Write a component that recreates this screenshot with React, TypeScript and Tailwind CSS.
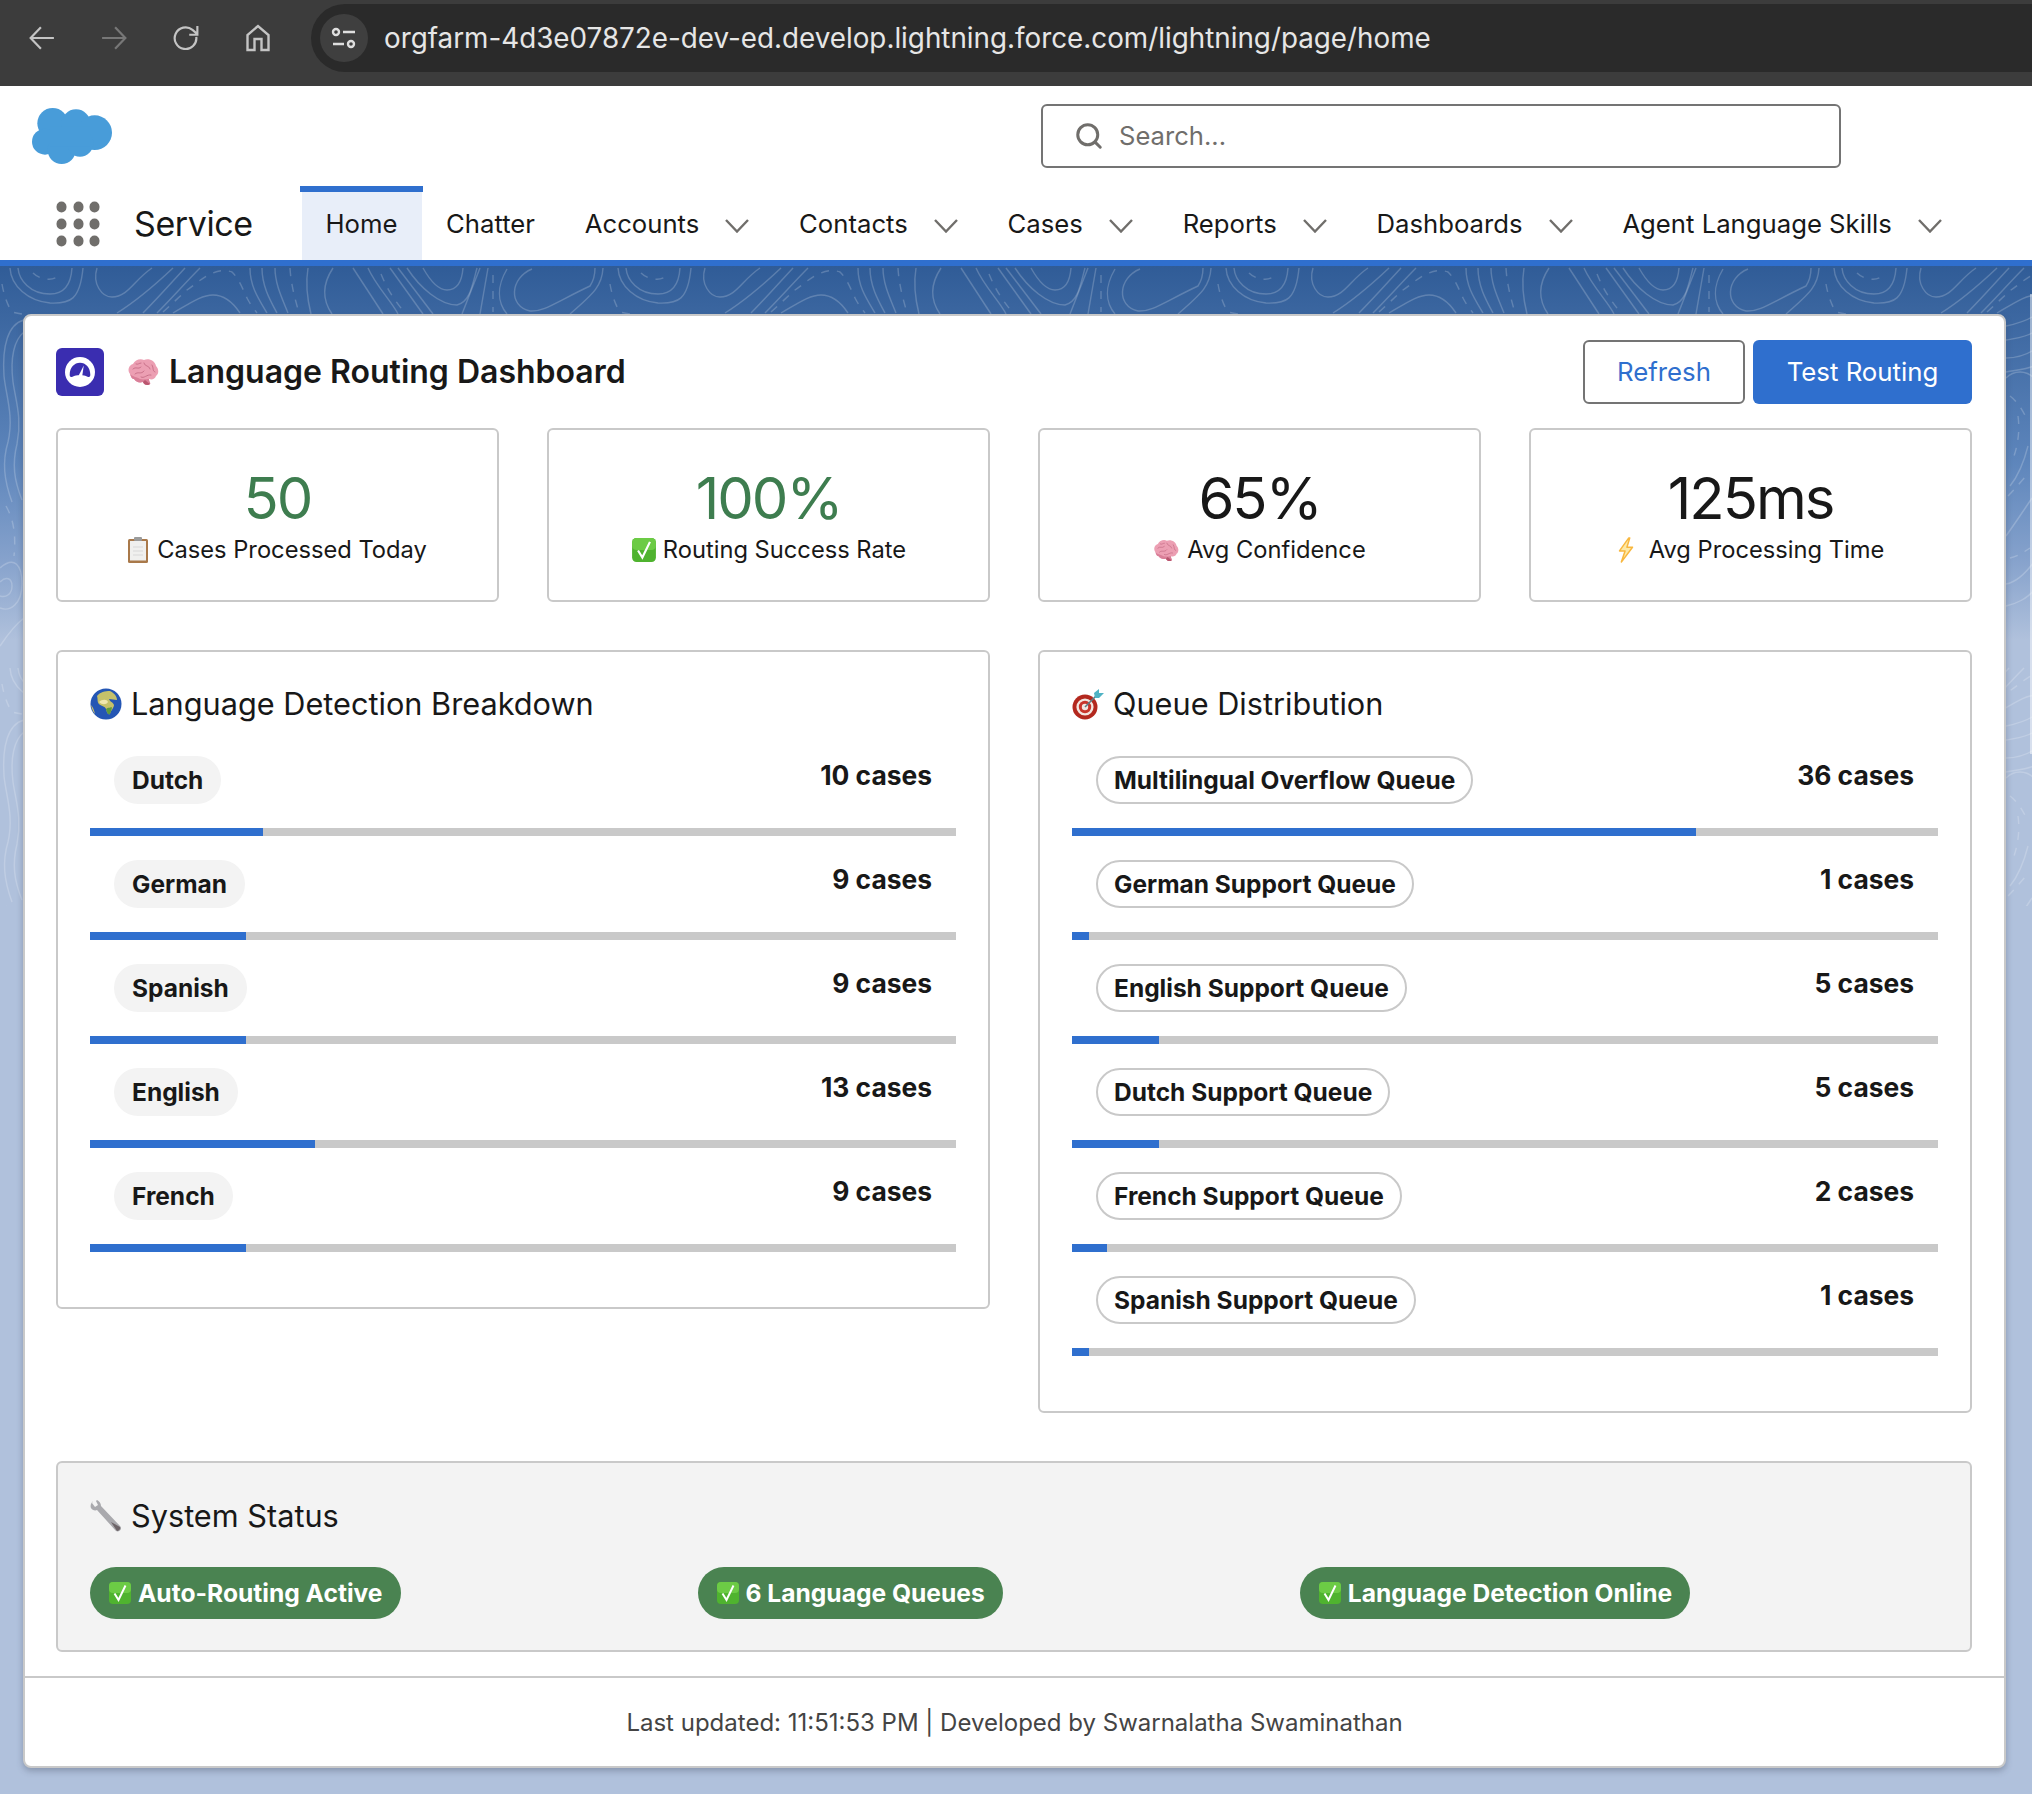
import React from "react";
import { Search } from "lucide-react";

const tabs = [
  { label: "Chatter", menu: false },
  { label: "Accounts", menu: true },
  { label: "Contacts", menu: true },
  { label: "Cases", menu: true },
  { label: "Reports", menu: true },
  { label: "Dashboards", menu: true },
  { label: "Agent Language Skills", menu: true },
];

const languages = [
  { name: "Dutch", count: 10 },
  { name: "German", count: 9 },
  { name: "Spanish", count: 9 },
  { name: "English", count: 13 },
  { name: "French", count: 9 },
];

const queues = [
  { name: "Multilingual Overflow Queue", count: 36 },
  { name: "German Support Queue", count: 1 },
  { name: "English Support Queue", count: 5 },
  { name: "Dutch Support Queue", count: 5 },
  { name: "French Support Queue", count: 2 },
  { name: "Spanish Support Queue", count: 1 },
];

function BrainIcon({ className }: { className: string }) {
  return (
    <svg viewBox="0 0 32 28" className={className}>
      <path
        d="M3 16C0 12 2 7 6 6C8 2 13 0 17 2C22 0 28 3 29 8C32 11 32 16 29 18C28 21 25 22 22 21C22 24 24 25 23 26C21 28 17 27 16 24C12 25 9 24 7 21C5 21 4 19 3 16Z"
        fill="#ec9fb3"
      />
      <path d="M3 16C6 19 10 19 13 21C16 22 20 21 22 21C22 24 24 25 23 26C21 28 17 27 16 24C12 25 9 24 7 21C5 21 4 19 3 16Z" fill="#d97f98" />
      <path
        d="M6 11C9 8 11 12 14 9M8 16C11 13 14 17 17 13M17 5C18 9 22 7 23 11M14 19C17 21 20 16 24 17M25 7C27 10 25 13 28 14M9 6C11 7 12 5 14 5"
        fill="none"
        stroke="#c56d86"
        strokeWidth="0.9"
        strokeLinecap="round"
      />
      <path d="M18 22C20 24 22 25 23 26C21 28 17 27 16 24Z" fill="#b9566f" />
    </svg>
  );
}

function CheckIcon({ className }: { className: string }) {
  return (
    <svg viewBox="0 0 24 24" className={className}>
      <rect x="1" y="1" width="22" height="22" rx="4" fill="#4fb32f" />
      <rect x="1" y="1" width="22" height="11" rx="4" fill="#6ccb45" />
      <path d="M6.5 12.5L10.5 19L17.5 4.5" fill="none" stroke="#fff" strokeWidth="2" />
    </svg>
  );
}

function ClipboardIcon({ className }: { className: string }) {
  return (
    <svg viewBox="0 0 20 26" className={className}>
      <rect x="0" y="2" width="20" height="24" rx="1.5" fill="#a9794a" />
      <rect x="2" y="4" width="16" height="19.5" fill="#f0f0ee" />
      <path d="M5 10H15M5 14H15M5 18H15" stroke="#d8d8d8" strokeWidth="1" />
      <rect x="6" y="0" width="8" height="4" rx="1" fill="#9b9b9b" />
    </svg>
  );
}

function BoltIcon({ className }: { className: string }) {
  return (
    <svg viewBox="0 0 18 28" className={className}>
      <path
        d="M12 1L2 15H8L4 27L16 11H10L13 1Z"
        fill="#fde9a6"
        stroke="#f8b73e"
        strokeWidth="1.6"
        strokeLinejoin="round"
      />
    </svg>
  );
}

function GlobeIcon({ className }: { className: string }) {
  return (
    <svg viewBox="0 0 32 32" className={className}>
      <circle cx="16" cy="16" r="15.5" fill="#2456b4" />
      <path
        d="M7 8C10 4 15 3 20 3C24 5 27 8 27 12C24 12 22 11 19 11C20 14 23 14 24 17C24 20 21 22 20 26C18 27 17 25 16 21C15 18 11 18 9 16C7 14 8 11 7 8Z"
        fill="#c5c16a"
      />
      <path d="M9 14C12 11 17 11 18 14C16 17 12 17 9 14Z" fill="#efe6ae" />
      <path d="M16 21C18 19 21 20 22 19C22 22 20 25 20 26C18 27 17 25 16 21Z" fill="#5f9a3c" />
      <path d="M1 17C2 21 3 24 5 26C4 22 3 19 1 17Z" fill="#d2c66f" />
    </svg>
  );
}

function TargetIcon({ className }: { className: string }) {
  return (
    <svg viewBox="0 0 32 32" className={className}>
      <circle cx="13" cy="19" r="12.5" fill="#b3281e" />
      <circle cx="13" cy="19" r="8.6" fill="#f3e6e0" />
      <circle cx="13" cy="19" r="6.2" fill="#c8352a" />
      <circle cx="13" cy="19" r="3.2" fill="#f3e6e0" />
      <path d="M13 19L24 8" stroke="#5b7d86" strokeWidth="1.6" />
      <path d="M22 5L27 1L27 5L32 5L27 10L23 10Z" fill="#4fb3c4" />
    </svg>
  );
}

function WrenchIcon({ className }: { className: string }) {
  return (
    <svg viewBox="0 0 32 32" className={className}>
      <path
        d="M3 1C1 3 0 6 1 8C2 10 5 11 7 10L26 31C28 32 30 31 31 29C31 28 31 27 30 26L11 6C11 3 9 1 7 0L6 1L8 5L5 7L2 3Z"
        fill="#a9a9ad"
      />
      <path d="M21 22L30 27C31 29 29 31 27 31Z" fill="#6d6468" />
    </svg>
  );
}

function NavChevron() {
  return (
    <svg viewBox="0 0 24 14" className="ml-[26px] w-[24px] h-[14px] mt-[3px]" fill="none" stroke="#706e6b" strokeWidth="2.4">
      <path d="M1 1L12 12.5L23 1" />
    </svg>
  );
}

// one tile of the contour lines behind the card
function Contours() {
  const solid = [
    "M10 2C11 20 28 35 50 37C70 38 80 34 83 2",
    "M18 2C19 14 30 28 50 28C64 28 71 18 72 2",
    "M97 2C92 18 102 31 112 31C128 31 134 14 152 2",
    "M117 47C138 34 156 18 173 2",
    "M143 47C158 32 172 16 185 2",
    "M157 47C172 32 186 16 200 2",
    "M173 47C192 36 202 29 213 29C226 29 234 38 240 47",
    "M250 2C250 20 258 32 267 47",
    "M262 2C262 20 270 34 277 47",
    "M275 2C275 18 282 32 288 47",
    "M308 2C305 20 308 36 311 48",
    "M333 2C321 20 323 35 332 48",
    "M353 2L383 48",
    "M368 2C376 20 392 36 398 48",
    "M390 2L423 48",
    "M398 2L433 48",
    "M407 2C420 22 440 39 457 39C470 36 472 20 477 2",
    "M423 2C432 18 440 24 447 24C458 24 462 15 463 2",
    "M480 2L462 48",
    "M488 2L480 48",
    "M507 3C497 20 497 36 507 48",
    "M532 3C510 12 508 40 530 45C544 46 556 36 590 20C594 14 595 8 595 2",
    "M603 2C602 22 590 30 570 48",
    // left strip
    "M24 54C8 58 2 80 4 110C6 130 14 150 8 176C2 196 4 214 12 236",
    "M24 66C14 74 10 92 13 116C16 136 22 152 17 178C12 198 14 214 22 234",
    "M0 302C14 290 22 298 22 318C22 338 10 346 0 342",
    "M0 316C6 310 12 312 12 320C12 328 6 332 0 330",
    "M0 380C8 368 16 358 24 352",
    // right strip
    "M182 60C192 58 200 56 210 50",
    "M182 74C192 72 200 72 210 66",
    "M182 92C192 92 200 90 210 84",
    "M182 106C192 104 200 104 210 100",
    "M182 112C190 104 202 104 210 112",
    "M186 220C194 210 200 196 204 180",
    "M182 270C192 256 200 244 208 232",
    "M182 318C194 316 204 304 210 296",
    "M182 340C192 338 204 332 210 324",
  ];
  const dashed = [
    "M33 7C38 12 50 16 57 11",
    "M2 18C4 30 8 40 12 46C30 50 48 52 66 58",
    "M163 46C172 38 180 30 187 24C196 18 204 10 213 7C220 4 226 4 232 6C240 14 243 24 247 32C250 38 254 43 257 47",
    "M290 2C291 20 296 36 299 47",
    "M381 8C386 20 392 32 406 48",
    "M493 9V46",
    "M610 2V33",
    "M6 240C14 254 16 270 14 290",
    "M186 130C194 136 200 146 204 156",
    "M194 150C196 164 194 178 190 190",
    "M184 230C192 222 198 214 204 208",
    "M186 292C194 290 200 286 206 282",
  ];
  return (
    <svg className="absolute left-0 top-0 w-full h-[640px]">
      <defs>
        <pattern id="contours" width="608" height="400" patternUnits="userSpaceOnUse">
          {solid.map((d, i) => (
            <path key={i} d={d} fill="none" stroke="#fff" strokeOpacity="0.2" strokeWidth="1.4" />
          ))}
          {dashed.map((d, i) => (
            <path
              key={i}
              d={d}
              fill="none"
              stroke="#fff"
              strokeOpacity="0.2"
              strokeWidth="1.4"
              strokeDasharray="8 8"
            />
          ))}
        </pattern>
      </defs>
      <rect width="100%" height="100%" fill="url(#contours)" />
    </svg>
  );
}

function BrowserBar() {
  return (
    <div className="h-[86px] bg-[#3c3c3c] flex items-start pt-1">
      <div className="flex w-[311px] h-[68px] items-center">
        <svg viewBox="0 0 24 24" className="ml-[29px] w-[26px] h-[26px]" fill="none" stroke="#c4c4c4" strokeWidth="2">
          <path d="M23 12H2M11 2L1.5 12L11 22" />
        </svg>
        <svg viewBox="0 0 24 24" className="ml-[46px] w-[26px] h-[26px]" fill="none" stroke="#777" strokeWidth="2">
          <path d="M1 12H22M13 2L22.5 12L13 22" />
        </svg>
        <svg viewBox="0 0 24 24" className="ml-[46px] w-[26px] h-[26px]" fill="none" stroke="#c4c4c4" strokeWidth="2">
          <path d="M21.5 11A10 10 0 1 1 18 4.5L22 8M22.5 1V9H15" />
        </svg>
        <svg viewBox="0 0 24 28" className="ml-[46px] w-[26px] h-[28px]" fill="none" stroke="#c4c4c4" strokeWidth="2.4">
          <path d="M1.5 26V11L12 2L22.5 11V26H15.5V15H8.5V26Z" />
        </svg>
      </div>
      <div className="flex-1 h-[68px] bg-[#2a2a2a] rounded-l-[34px] flex items-center pl-[9px]">
        <div className="w-[48px] h-[48px] rounded-full bg-[#3f3f3f] flex items-center justify-center">
          <svg viewBox="0 0 26 24" className="w-[26px] h-[24px]" fill="none" stroke="#dedede" strokeWidth="2.4">
            <circle cx="5" cy="6" r="3" />
            <path d="M12 6H24M2 18H13" />
            <circle cx="20" cy="18" r="3" />
          </svg>
        </div>
        <span className="ml-[16px] pt-[2px] text-[27.8px] leading-none text-[#e6e6e6]">
          orgfarm-4d3e07872e-dev-ed.develop.lightning.force.com/lightning/page/home
        </span>
      </div>
    </div>
  );
}

function AppHeader() {
  return (
    <header className="bg-white">
      <div className="h-[100px] flex items-start">
        <svg viewBox="96 324 240 168" className="ml-[32px] mt-[22px] w-[80px] h-[56px]" fill="#489cd9">
          <circle cx="158" cy="370" r="46" />
          <circle cx="228" cy="372" r="44" />
          <circle cx="284" cy="398" r="52" />
          <circle cx="135" cy="425" r="39" />
          <circle cx="185" cy="450" r="42" />
          <circle cx="240" cy="430" r="40" />
          <rect x="150" y="380" width="120" height="60" />
        </svg>
        <div className="ml-[929px] mt-[18px] w-[800px] h-[64px] border-2 border-[#747474] rounded-[6px] flex items-center pl-[31px]">
          <Search className="w-[30px] h-[30px] text-[#706e6b]" strokeWidth={2.4} />
          <span className="ml-[15px] pt-[1px] text-[25.6px] text-[#706e6b]">Search...</span>
        </div>
      </div>
      <nav className="h-[74px] flex items-stretch">
        <div className="ml-[57px] w-[42px] h-[42px] mt-[16px] grid grid-cols-3 gap-x-[8px] gap-y-[7px]">
          {Array.from({ length: 9 }).map((_, i) => (
            <span key={i} className="w-[9px] h-[10px] rounded-full bg-[#706e6b] scale-110" />
          ))}
        </div>
        <div className="ml-[35px] w-[166px] flex items-center text-[34px] tracking-[-0.4px] leading-none text-[#181818] pt-[1px]">
          Service
        </div>
        <div className="w-[123px] flex flex-col items-center">
          <div className="w-[123px] h-[6px] bg-[#2f6fce]" />
          <div className="w-[120px] flex-1 bg-[#e8eef9] flex items-center justify-center text-[25.7px] text-[#181818]">
            <span className="-mt-[3px]">Home</span>
          </div>
        </div>
        {tabs.map((tab) => (
          <div key={tab.label} className="pl-[23px] pr-[26.8px] pt-[3px] flex items-center text-[25.7px] text-[#181818]">
            <span>{tab.label}</span>
            {tab.menu && <NavChevron />}
          </div>
        ))}
      </nav>
      <div className="h-[6px] bg-[#2f6fce]" />
    </header>
  );
}

function StatCard({ value, green, icon, label }: { value: string; green?: boolean; icon: React.ReactNode; label: string }) {
  return (
    <div className="border-2 border-[#c9c9c9] rounded-[6px] h-[174px] flex flex-col items-center pt-[37px]">
      <div className={`text-[58px] leading-[62px] tracking-[-2px] ${green ? "text-[#3e7d4f]" : "text-[#181818]"}`}>{value}</div>
      <div className="mt-[3px] flex items-center text-[23.7px] leading-[36px] text-[#181818]">
        {icon}
        <span>{label}</span>
      </div>
    </div>
  );
}

function BreakdownRow({ name, count, outlined, total }: { name: string; count: number; outlined?: boolean; total: number }) {
  const pct = (count / total) * 100;
  return (
    <div className="pb-[24px]">
      <div className="flex items-start justify-between px-[24px]">
        <span
          className={`h-[48px] rounded-full pt-[1px] flex items-center text-[24.5px] font-bold text-[#181818] ${
            outlined ? "border-2 border-[#c9c9c9] bg-white px-[16px]" : "bg-[#f3f3f3] px-[18px]"
          }`}
        >
          {name}
        </span>
        <span className="text-[26.4px] leading-[38px] font-bold text-[#181818]">{count} cases</span>
      </div>
      <div className="mt-[24px] h-[8px] bg-[#c9c9c9]">
        <div className="h-full bg-[#2f6fce]" style={{ width: `${pct}%` }} />
      </div>
    </div>
  );
}

function StatusPill({ label }: { label: string }) {
  return (
    <span className="h-[52px] rounded-full bg-[#4a8351] pl-[18px] pr-[18px] flex items-center text-[24.6px] font-bold text-white whitespace-nowrap">
      <CheckIcon className="w-[24px] h-[24px] mr-[6px]" />
      {label}
    </span>
  );
}

export default function App() {
  return (
    <div className="w-[2032px] min-h-[1794px] overflow-hidden [font-family:Inter,'Noto_Sans',sans-serif] bg-[#b0c1dc]">
      <BrowserBar />
      <AppHeader />
      <main className="relative bg-[linear-gradient(to_bottom,#305c97_0px,#5d85bb_194px,#86a2cc_294px,#b0c1dc_374px,#b0c1dc_100%)] pl-[23px] pr-[26px] pt-[48px] pb-[25px]">
        <Contours />
        {/* pale sliver along the right edge of the page */}
        <div className="absolute right-0 top-[28px] w-[2px] h-[460px] bg-white/50" />
        <div className="relative bg-white border-2 border-[#c9c9c9] rounded-[8px] shadow-[0_3px_6px_rgba(60,70,90,0.35)]">
          <div className="pl-[31px] pr-[32px] pt-[24px] pb-[24px]">
            <div className="h-[64px] flex items-center">
              <div className="w-[48px] h-[48px] rounded-[6px] bg-[#3a2db0] flex items-center justify-center">
                <svg viewBox="0 0 32 32" className="w-[30px] h-[30px]">
                  <circle cx="16" cy="16" r="16" fill="#fff" />
                  <path d="M5 19C5 11 10 6 16 6C22 6 27 11 27 19C27 21 26 22 24 21C20 19 12 19 8 21C6 22 5 21 5 19Z" fill="#3a2db0" />
                  <path d="M13 23L20 9L18 23Z" fill="#fff" />
                </svg>
              </div>
              <BrainIcon className="ml-[23px] w-[32px] h-[28px]" />
              <h1 className="ml-[10px] text-[32px] leading-none font-semibold text-[#181818]">Language Routing Dashboard</h1>
              <button className="ml-auto h-[64px] w-[162px] border-2 border-[#747474] rounded-[6px] bg-white text-[25.8px] text-[#2f6fce]">
                Refresh
              </button>
              <button className="ml-[8px] h-[64px] w-[219px] rounded-[6px] bg-[#2f6fce] text-[25.8px] text-white">Test Routing</button>
            </div>

            <div className="mt-[24px] grid grid-cols-[repeat(4,443px)] gap-[48px]">
              <StatCard value="50" green icon={<ClipboardIcon className="w-[20px] h-[26px] mr-[9px]" />} label="Cases Processed Today" />
              <StatCard value="100%" green icon={<CheckIcon className="w-[26px] h-[26px] mr-[6px]" />} label="Routing Success Rate" />
              <StatCard value="65%" icon={<BrainIcon className="w-[26px] h-[23px] mr-[8px]" />} label="Avg Confidence" />
              <StatCard value="125ms" icon={<BoltIcon className="w-[18px] h-[26px] mr-[14px]" />} label="Avg Processing Time" />
            </div>

            <div className="mt-[48px] grid grid-cols-[934px_934px] gap-[48px] items-start">
              <section className="border-2 border-[#c9c9c9] rounded-[6px] pt-[30px] px-[32px] pb-[31px]">
                <h2 className="flex items-center text-[30.7px] leading-[44px] text-[#181818]">
                  <GlobeIcon className="w-[32px] h-[32px] mr-[9px]" />
                  Language Detection Breakdown
                </h2>
                <div className="mt-[30px]">
                  {languages.map((l) => (
                    <BreakdownRow key={l.name} name={l.name} count={l.count} total={50} />
                  ))}
                </div>
              </section>
              <section className="border-2 border-[#c9c9c9] rounded-[6px] pt-[30px] px-[32px] pb-[31px]">
                <h2 className="flex items-center text-[30.7px] leading-[44px] text-[#181818]">
                  <TargetIcon className="w-[32px] h-[32px] mr-[9px]" />
                  Queue Distribution
                </h2>
                <div className="mt-[30px]">
                  {queues.map((q) => (
                    <BreakdownRow key={q.name} name={q.name} count={q.count} total={50} outlined />
                  ))}
                </div>
              </section>
            </div>

            <section className="mt-[48px] h-[191px] border-2 border-[#c9c9c9] rounded-[6px] bg-[#f3f3f3] pt-[31px] px-[32px]">
              <h2 className="flex items-center text-[30.7px] leading-[44px] text-[#181818]">
                <WrenchIcon className="w-[32px] h-[32px] mr-[9px]" />
                System Status
              </h2>
              <div className="mt-[29px] flex gap-[297px]">
                <StatusPill label="Auto-Routing Active" />
                <StatusPill label="6 Language Queues" />
                <StatusPill label="Language Detection Online" />
              </div>
            </section>
          </div>
          <footer className="border-t-2 border-[#c9c9c9] h-[90px] pt-[1px] flex items-center justify-center text-[24px] text-[#444]">
            Last updated: 11:51:53 PM | Developed by Swarnalatha Swaminathan
          </footer>
        </div>
      </main>
    </div>
  );
}
